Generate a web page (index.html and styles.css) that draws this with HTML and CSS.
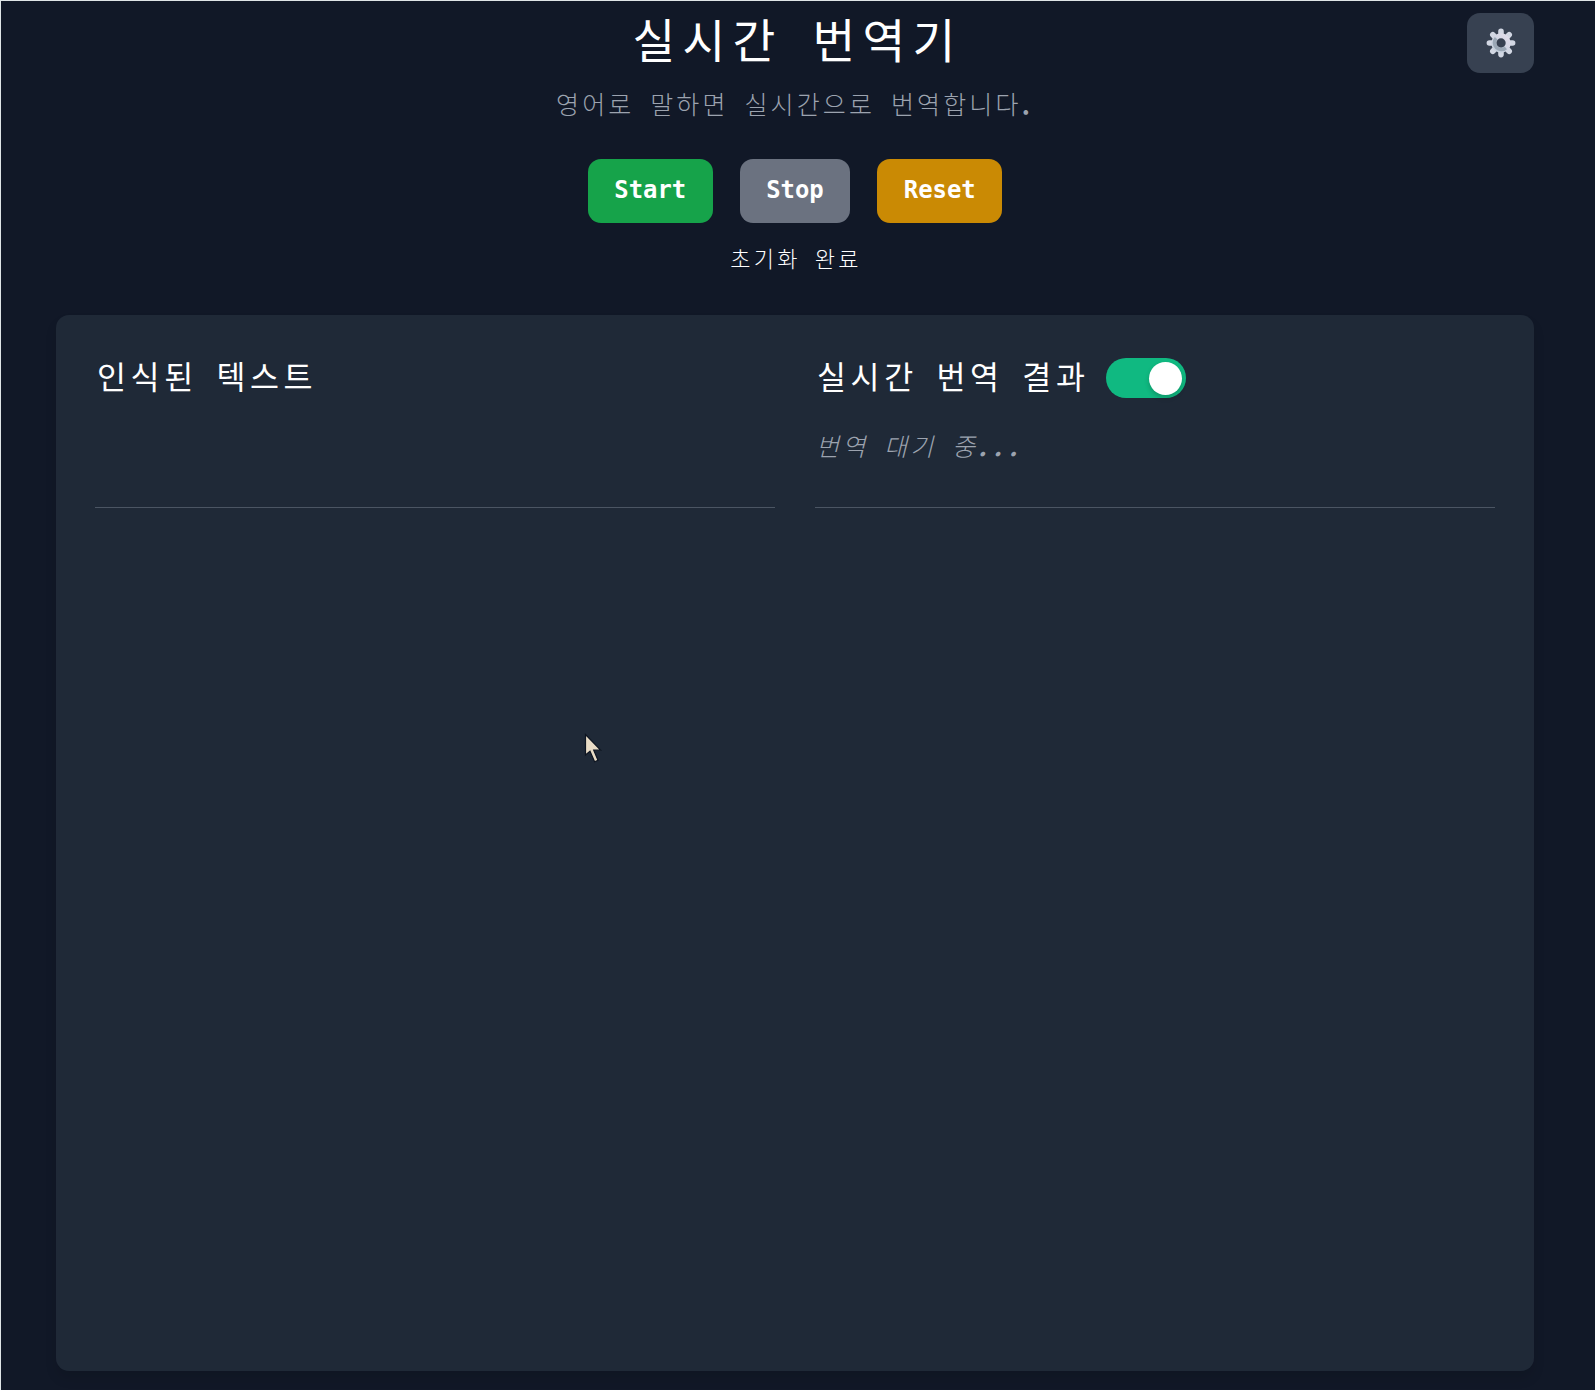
FILE: index.html
```html
<!DOCTYPE html>
<html lang="ko">
<head>
<meta charset="utf-8">
<title>실시간 번역기</title>
<link rel="stylesheet" href="styles.css">
</head>
<body>
<div class="page">
  <header class="header">
    <div class="heading">
      <h1 class="title">실시간 번역기</h1>
      <p class="subtitle">영어로 말하면 실시간으로 번역합니다<span class="dots">.</span></p>
    </div>
    <button class="settings" aria-label="설정">
      <svg width="30" height="30" viewBox="-15 -15 30 30">
        <defs>
          <linearGradient id="metal" x1="0" y1="1" x2="1" y2="0">
            <stop offset="0" stop-color="#c3cfdc"/><stop offset="1" stop-color="#e0dcea"/>
          </linearGradient>
        </defs>
        <g stroke="#d2d7e3" stroke-width="5.6" stroke-linecap="round">
          <path d="M0-11.6V-8M0 11.6V8M-11.6 0H-8M11.6 0H8M-8.2-8.2L-6-6M8.2-8.2L6-6M-8.2 8.2L-6 6M8.2 8.2L6 6"/>
        </g>
        <circle r="7.2" fill="none" stroke="url(#metal)" stroke-width="5"/>
        <path d="M-4.8-4.8A6.8 6.8 0 0 0 4.8 4.8" fill="none" stroke="#9ba8b6" stroke-width="3.6"/>
      </svg>
    </button>
  </header>
  <div class="controls">
    <button class="btn start">Start</button>
    <button class="btn stop">Stop</button>
    <button class="btn reset">Reset</button>
  </div>
  <p class="status">초기화 완료</p>
  <main class="card">
    <section class="column">
      <div class="column-head"><h2 class="column-title">인식된 텍스트</h2></div>
      <p class="live"></p>
    </section>
    <section class="column">
      <div class="column-head">
        <h2 class="column-title">실시간 번역 결과</h2>
        <span class="toggle" role="switch" aria-checked="true"><span class="knob"></span></span>
      </div>
      <p class="live">번역 대기 중<span class="dots">...</span></p>
    </section>
  </main>
</div>
<svg class="cursor" width="20" height="32" viewBox="0 0 20 32">
  <path d="M1.5 1.5V22L6 18.2L10.6 28.8L14 27.3L9.7 17.2H16.6Z" fill="#e9dcc6" stroke="#0d1420" stroke-width="1.2"/>
</svg>
</body>
</html>
```
FILE: styles.css
```css
* { box-sizing: border-box; margin: 0; }

body {
  height: 1390px;
  overflow: hidden;
  background: #111827;
  border-top: 1px solid #dfe5e6;
  border-left: 1px solid #dfe5e6;
  color: #fff;
  font-family: "Noto Sans CJK KR", sans-serif;
}

.page {
  height: 100%;
  display: flex;
  flex-direction: column;
  align-items: center;
  padding: 12px 61px 19px 55px;
}

.header {
  width: 100%;
  display: grid;
  grid-template-columns: 67px 1fr 67px;
  height: 146px;
}

.heading { grid-column: 2; text-align: center; }

.title {
  padding-left: 5px;
  font-size: 46.5px;
  line-height: 50px;
  font-weight: 400;
  letter-spacing: 7.2px;
  word-spacing: 10px;
}

.subtitle {
  margin-top: 20px;
  padding-left: 3px;
  font-size: 25px;
  line-height: 40px;
  font-weight: 300;
  letter-spacing: 3.15px;
  word-spacing: 5.6px;
  color: #9ca3af;
}

.dots {
  font-weight: 700;
  letter-spacing: 7.2px;
}

.settings {
  grid-column: 3;
  width: 67px;
  height: 60px;
  display: flex;
  align-items: center;
  justify-content: center;
  padding: 0;
  border: 0;
  border-radius: 13px;
  background: #374151;
}

.controls { display: flex; gap: 27px; }

.btn {
  height: 64px;
  padding: 0 26.5px 2px;
  border: 0;
  border-radius: 13px;
  color: #fff;
  font: bold 23.9px "DejaVu Sans Mono", monospace;
}

.start { background: #16a34a; }
.stop { background: #6b7280; }
.reset { background: #ca8a04; }

.status {
  margin-top: 14px;
  padding-left: 2px;
  font-size: 22px;
  line-height: 40px;
  font-weight: 300;
  letter-spacing: 3.3px;
  word-spacing: 4.5px;
}

.card {
  width: 100%;
  flex: 1;
  margin-top: 38px;
  padding: 40px 39px;
  display: grid;
  grid-template-columns: 1fr 1fr;
  gap: 40px;
  border-radius: 13px;
  background: #1f2937;
  box-shadow: 0 8px 12px rgba(0, 0, 0, 0.1);
}

.column-head {
  height: 46px;
  display: flex;
  align-items: center;
  gap: 16px;
}

.column-title {
  padding: 0 0 5px 2px;
  font-size: 31.5px;
  line-height: 41px;
  font-weight: 400;
  letter-spacing: 4.6px;
  word-spacing: 5.3px;
}

.toggle {
  width: 80px;
  height: 40px;
  padding: 4px;
  display: flex;
  justify-content: flex-end;
  border-radius: 20px;
  background: #10b981;
}

.knob {
  width: 33px;
  height: 33px;
  border-radius: 50%;
  background: #fff;
  box-shadow: 0 3px 5px rgba(0, 0, 0, 0.18);
}

.live {
  height: 107px;
  padding: 24px 0 0 1px;
  border-bottom: 1px solid #4b5563;
  font-size: 25px;
  line-height: 40px;
  font-weight: 300;
  font-style: italic;
  letter-spacing: 3.15px;
  word-spacing: 5.6px;
  color: #9ca3af;
}

.cursor {
  position: absolute;
  left: 584px;
  top: 733px;
}
```
